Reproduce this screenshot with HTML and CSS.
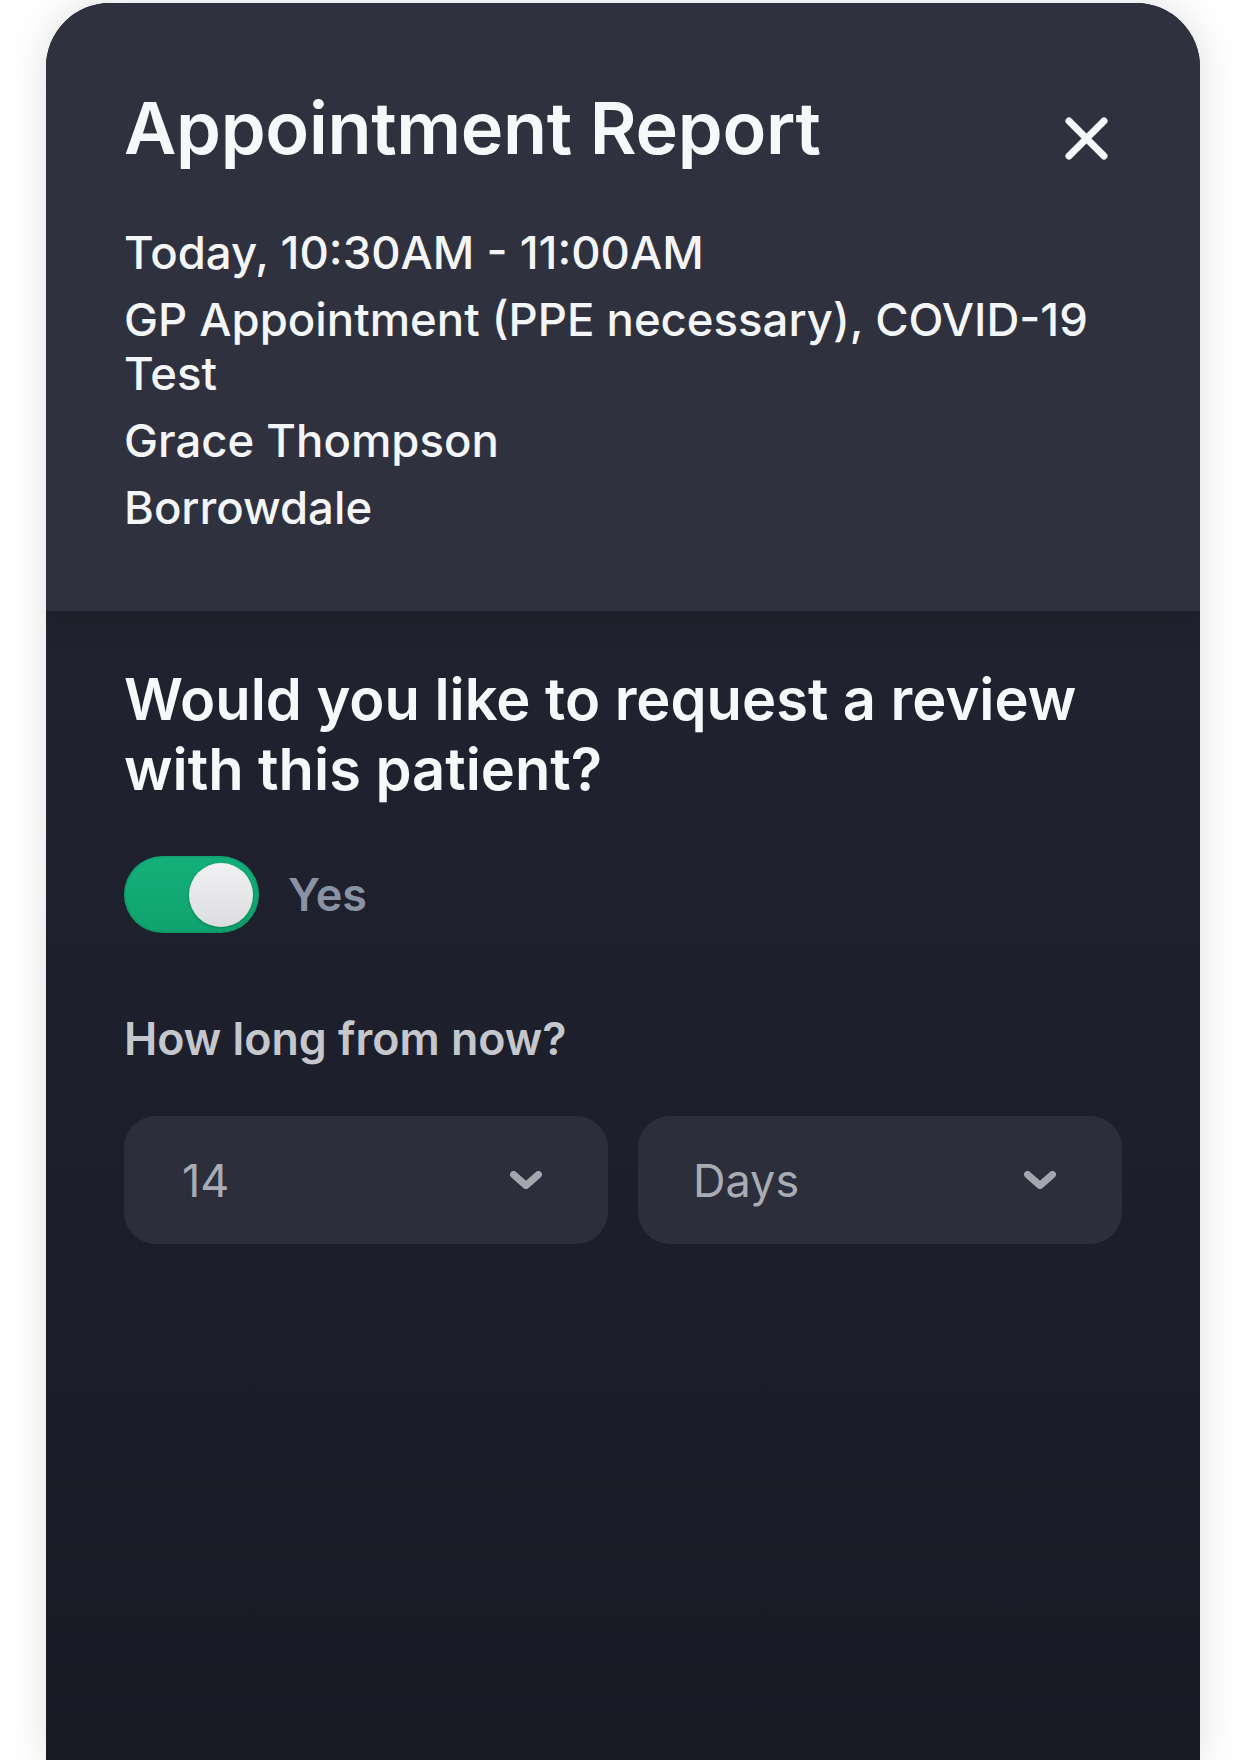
FILE: index.html
```html
<!DOCTYPE html>
<html lang="en">
<head>
<meta charset="utf-8">
<title>Appointment Report</title>
<link rel="stylesheet" href="styles.css">
</head>
<body>
<div class="sheet">
  <header class="sheet-header">
    <div class="title-row">
      <h1 class="title">Appointment Report</h1>
      <button class="close-btn" aria-label="Close">
        <svg width="43" height="43" viewBox="0 0 43 43"><path d="M4 4 L39 39 M39 4 L4 39" stroke="#f7f8fa" stroke-width="7" stroke-linecap="round" fill="none"/></svg>
      </button>
    </div>
    <p class="detail">Today, 10:30AM - 11:00AM</p>
    <p class="detail">GP Appointment (PPE necessary), COVID-19 Test</p>
    <p class="detail">Grace Thompson</p>
    <p class="detail">Borrowdale</p>
  </header>
  <main class="sheet-body">
    <h2 class="question">Would you like to request a review with this patient?</h2>
    <div class="toggle-row">
      <div class="toggle"><div class="knob"></div></div>
      <span class="toggle-label">Yes</span>
    </div>
    <div class="field-label">How long from now?</div>
    <div class="selects">
      <div class="select">
        <span class="select-value">14</span>
        <svg class="chev" width="32" height="18" viewBox="0 0 32 18"><path d="M3.5 3.5 L16 14.5 L28.5 3.5" stroke="#a3a6ad" stroke-width="7" stroke-linecap="round" stroke-linejoin="round" fill="none"/></svg>
      </div>
      <div class="select">
        <span class="select-value">Days</span>
        <svg class="chev" width="32" height="18" viewBox="0 0 32 18"><path d="M3.5 3.5 L16 14.5 L28.5 3.5" stroke="#a3a6ad" stroke-width="7" stroke-linecap="round" stroke-linejoin="round" fill="none"/></svg>
      </div>
    </div>
  </main>
</div>
</body>
</html>
```
FILE: styles.css
```css
* { box-sizing: border-box; }
html, body { margin: 0; padding: 0; background: #ffffff; }
body {
  font-family: Inter, "Noto Sans", sans-serif;
  height: 1760px;
  overflow: hidden;
}
.sheet {
  width: 1154px;
  height: 1757px;
  margin: 3px 0 0 46px;
  border-radius: 64px 64px 0 0;
  overflow: hidden;
  display: flex;
  flex-direction: column;
  box-shadow: 0 0 40px rgba(0, 0, 0, 0.13);
  background: linear-gradient(180deg, #242734 0%, #1f222e 45%, #181b26 100%);
}
.sheet-header {
  background: #2f323e;
  padding: 81px 78px 76px 78px;
  position: relative;
  z-index: 1;
  box-shadow: 0 8px 30px rgba(0, 0, 0, 0.18);
}
.title-row {
  display: flex;
  justify-content: space-between;
  align-items: flex-start;
  margin-bottom: 52px;
}
.title {
  margin: 0;
  font-size: 72px;
  line-height: 88px;
  font-weight: 600;
  color: #f7f8fa;
  letter-spacing: -0.3px;
}
.close-btn {
  width: 72px;
  height: 72px;
  margin-top: 18px;
  border: 0;
  padding: 0;
  background: transparent;
  display: flex;
  align-items: center;
  justify-content: center;
}
.detail {
  margin: 0 0 13px 0;
  font-size: 45.5px;
  line-height: 54px;
  font-weight: 500;
  color: #f4f5f7;
}
.detail:last-child { margin-bottom: 0; }
.sheet-body {
  flex: 1;
  padding: 53px 78px 0 78px;
}
.question {
  margin: 0;
  font-size: 57.8px;
  line-height: 70px;
  font-weight: 600;
  color: #f7f8fa;
}
.toggle-row {
  display: flex;
  align-items: center;
  gap: 29px;
  margin-top: 52px;
}
.toggle {
  width: 135px;
  height: 77px;
  border-radius: 39px;
  background: linear-gradient(180deg, #14b07a 0%, #10a26f 100%);
  box-shadow: inset 0 0 0 2px rgba(0, 0, 0, 0.06);
  display: flex;
  align-items: center;
  justify-content: flex-end;
  padding: 0 6px;
}
.knob {
  width: 64px;
  height: 64px;
  border-radius: 50%;
  background: linear-gradient(180deg, #f1f1f3 0%, #dcdde0 100%);
  box-shadow: 0 1px 3px rgba(0, 0, 0, 0.25);
}
.toggle-label {
  font-size: 45px;
  font-weight: 600;
  color: #8a93a6;
}
.field-label {
  margin-top: 79px;
  font-size: 44.7px;
  line-height: 54px;
  font-weight: 600;
  color: #c5c7cd;
}
.selects {
  display: grid;
  grid-template-columns: 1fr 1fr;
  gap: 30px;
  margin-top: 50px;
}
.select {
  height: 128px;
  border-radius: 32px;
  background: #2c2f3b;
  display: flex;
  align-items: center;
  justify-content: space-between;
  padding: 0 66px 0 55px;
}
.select-value {
  font-size: 45px;
  font-weight: 400;
  color: #a9acb3;
}
.select:first-child .select-value { margin-left: 3px; }
.chev { display: block; margin-top: 0; }
```
